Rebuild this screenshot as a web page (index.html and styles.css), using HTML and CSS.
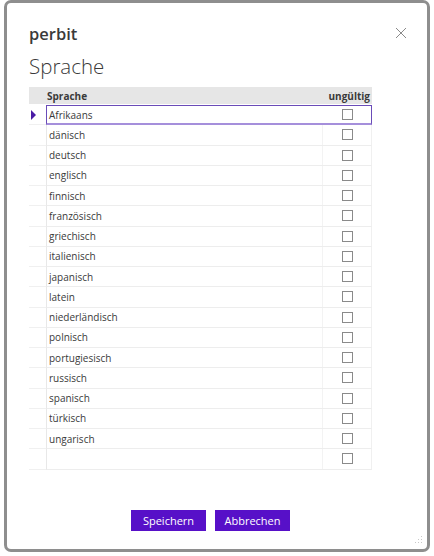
FILE: index.html
```html
<!DOCTYPE html>
<html lang="de">
<head>
<meta charset="utf-8">
<title>perbit – Sprache</title>
<link rel="stylesheet" href="styles.css">
</head>
<body>
<div class="dialog">
  <button class="close" aria-label="Schließen">
    <svg width="12" height="12" viewBox="0 0 12 12"><path d="M1 1L11 11M11 1L1 11" stroke="#8a8a8a" stroke-width="1" fill="none"/></svg>
  </button>
  <div class="brand">perbit</div>
  <h1 class="title">Sprache</h1>
  <div class="grid">
    <div class="row head">
      <div class="sel"></div>
      <div class="c-name">Sprache</div>
      <div class="c-flag">ungültig</div>
    </div>
    <div class="row current">
      <div class="sel"><span class="arrow"></span></div>
      <div class="cells">
        <div class="c-name">Afrikaans</div>
        <div class="c-flag"><span class="cb"></span></div>
      </div>
    </div>
    <div class="row"><div class="sel"></div><div class="cells"><div class="c-name">dänisch</div><div class="c-flag"><span class="cb"></span></div></div></div>
    <div class="row"><div class="sel"></div><div class="cells"><div class="c-name">deutsch</div><div class="c-flag"><span class="cb"></span></div></div></div>
    <div class="row"><div class="sel"></div><div class="cells"><div class="c-name">englisch</div><div class="c-flag"><span class="cb"></span></div></div></div>
    <div class="row"><div class="sel"></div><div class="cells"><div class="c-name">finnisch</div><div class="c-flag"><span class="cb"></span></div></div></div>
    <div class="row"><div class="sel"></div><div class="cells"><div class="c-name">französisch</div><div class="c-flag"><span class="cb"></span></div></div></div>
    <div class="row"><div class="sel"></div><div class="cells"><div class="c-name">griechisch</div><div class="c-flag"><span class="cb"></span></div></div></div>
    <div class="row"><div class="sel"></div><div class="cells"><div class="c-name">italienisch</div><div class="c-flag"><span class="cb"></span></div></div></div>
    <div class="row"><div class="sel"></div><div class="cells"><div class="c-name">japanisch</div><div class="c-flag"><span class="cb"></span></div></div></div>
    <div class="row"><div class="sel"></div><div class="cells"><div class="c-name">latein</div><div class="c-flag"><span class="cb"></span></div></div></div>
    <div class="row"><div class="sel"></div><div class="cells"><div class="c-name">niederländisch</div><div class="c-flag"><span class="cb"></span></div></div></div>
    <div class="row"><div class="sel"></div><div class="cells"><div class="c-name">polnisch</div><div class="c-flag"><span class="cb"></span></div></div></div>
    <div class="row"><div class="sel"></div><div class="cells"><div class="c-name">portugiesisch</div><div class="c-flag"><span class="cb"></span></div></div></div>
    <div class="row"><div class="sel"></div><div class="cells"><div class="c-name">russisch</div><div class="c-flag"><span class="cb"></span></div></div></div>
    <div class="row"><div class="sel"></div><div class="cells"><div class="c-name">spanisch</div><div class="c-flag"><span class="cb"></span></div></div></div>
    <div class="row"><div class="sel"></div><div class="cells"><div class="c-name">türkisch</div><div class="c-flag"><span class="cb"></span></div></div></div>
    <div class="row"><div class="sel"></div><div class="cells"><div class="c-name">ungarisch</div><div class="c-flag"><span class="cb"></span></div></div></div>
    <div class="row"><div class="sel"></div><div class="cells"><div class="c-name"></div><div class="c-flag"><span class="cb"></span></div></div></div>
  </div>
  <div class="actions">
    <button class="btn">Speichern</button>
    <button class="btn">Abbrechen</button>
  </div>
  <svg class="grip" width="8" height="8" viewBox="0 0 8 8">
    <rect x="6" y="0" width="1" height="1" fill="#c8c8c8"/>
    <rect x="3" y="3" width="1" height="1" fill="#c8c8c8"/>
    <rect x="6" y="3" width="1" height="1" fill="#c8c8c8"/>
    <rect x="0" y="6" width="1" height="1" fill="#c8c8c8"/>
    <rect x="3" y="6" width="1" height="1" fill="#c8c8c8"/>
    <rect x="6" y="6" width="1" height="1" fill="#c8c8c8"/>
  </svg>
</div>
</body>
</html>
```
FILE: styles.css
```css
* { box-sizing: border-box; }
html, body { margin: 0; padding: 0; background: #ffffff; }
body {
  font-family: "Open Sans", "Noto Sans", "Liberation Sans", sans-serif;
  color: #3a3a3a;
}
.dialog {
  position: relative;
  margin: 0 4px;
  width: 426px;
  height: 552px;
  border: 3px solid #8e8e8e;
  border-radius: 7px;
  background: #ffffff;
  padding: 20px 22px 0 22px;
  display: flex;
  flex-direction: column;
}
.close {
  position: absolute;
  top: 23px;
  right: 19px;
  width: 14px;
  height: 14px;
  padding: 1px;
  border: 0;
  background: transparent;
  display: flex;
  align-items: center;
  justify-content: center;
}
.brand {
  font-size: 16.5px;
  font-weight: 600;
  line-height: 22px;
  color: #3a3a3a;
}
.title {
  margin: 6px 0 0 0;
  font-size: 20.5px;
  font-weight: 300;
  line-height: 30px;
  color: #3a3a3a;
}
.grid {
  margin-top: 6px;
  width: 343px;
  font-size: 10px;
}
.row {
  display: flex;
  height: 20.25px;
}
.row .sel {
  width: 17px;
  flex: 0 0 17px;
  display: flex;
  align-items: center;
  padding-left: 2px;
  border-bottom: 1px solid #f0f0f0;
}
.cells {
  flex: 1;
  display: flex;
  border-left: 1px solid #e8e8e8;
  border-right: 1px solid #f0f0f0;
  border-bottom: 1px solid #ededed;
}
.c-name {
  flex: 1;
  padding-left: 2px;
  display: flex;
  align-items: center;
  line-height: 14px;
}
.c-flag {
  width: 49px;
  flex: 0 0 49px;
  display: flex;
  align-items: center;
  justify-content: center;
  border-left: 1px solid #f3f3f3;
}
.row.head {
  height: 17px;
  background: #e6e6e6;
  font-weight: 700;
  margin-bottom: 1px;
}
.row.head .sel { border-bottom: 0; }
.row.head .c-name { padding-left: 1px; }
.row.head .c-flag {
  border-left: 0;
  justify-content: flex-end;
  padding-right: 2px;
}
.row.current .cells {
  border: 1px solid #6a4cb8;
  border-bottom: 2px solid #a58fdb;
}
.row.current .c-flag { border-left-color: transparent; }
.arrow {
  width: 0;
  height: 0;
  border-top: 5px solid transparent;
  border-bottom: 5px solid transparent;
  border-left: 5px solid #4a1ca6;
}
.cb {
  width: 11px;
  height: 11px;
  border: 1px solid #8a8a8a;
  background: #ffffff;
  margin-left: 1px;
}
.actions {
  margin-top: 40px;
  padding-left: 102px;
  display: flex;
  gap: 9px;
}
.btn {
  width: 75px;
  height: 21px;
  border: 0;
  background: #5710c8;
  color: #ffffff;
  font-family: "Open Sans", "Noto Sans", "Liberation Sans", sans-serif;
  font-size: 11px;
  padding: 0;
}
.grip {
  position: absolute;
  right: 4px;
  bottom: 5px;
}
```
